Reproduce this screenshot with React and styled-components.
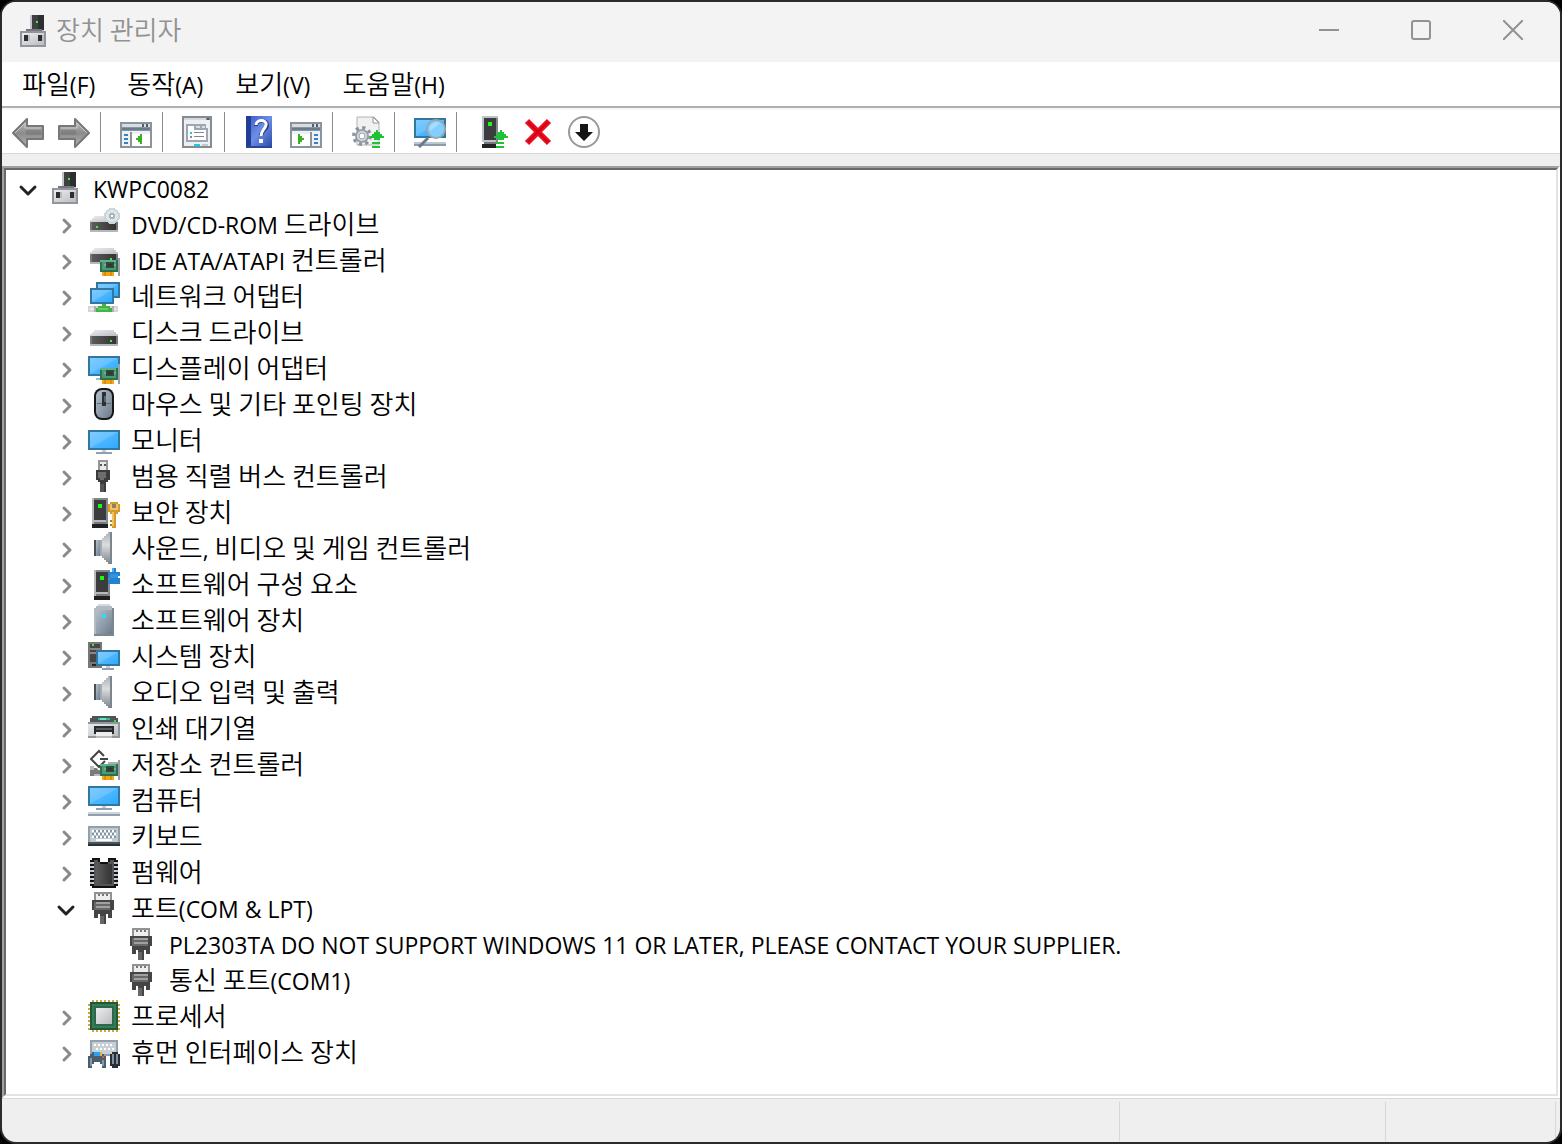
import React, { useState } from 'react';
import styled, { createGlobalStyle } from 'styled-components';

const GlobalStyle = createGlobalStyle`
  * {
    box-sizing: border-box;
  }
  body {
    margin: 0;
    background: #000;
    color: #000;
    font-family: "Noto Sans CJK KR", sans-serif;
    font-size: 26px;
    font-weight: 350;
  }
  button {
    padding: 0;
    border: 0;
    background: none;
    color: inherit;
    font: inherit;
  }
`;

const Window = styled.main`
  display: flex;
  flex-direction: column;
  min-height: 100vh;
  border: 2px solid #2b2b2d;
  border-radius: 16px;
  background: #efefef;
  overflow: hidden;
`;

const TitleBar = styled.header`
  display: flex;
  align-items: flex-start;
  height: 60px;
  padding: 0 1px 0 16px;
  background: #f3f3f3;
  color: #929292;
`;
const TitleIcon = styled.span`
  display: flex;
  padding-top: 13px;
`;
const Title = styled.h1`
  flex: 1;
  margin: 0;
  padding-left: 6px;
  font-size: 26px;
  font-weight: 350;
  line-height: 54px;
`;
const Caption = styled.button`
  display: flex;
  align-items: center;
  justify-content: center;
  width: 92px;
  height: 56px;
`;

const MenuBar = styled.nav`
  display: flex;
  gap: 32px;
  height: 46px;
  padding-left: 20px;
  border-bottom: 2px solid #b0b0b0;
  background: #fff;
`;
const MenuItem = styled.button`
  height: 42px;
  line-height: 42px;
  white-space: nowrap;
`;

const Latin = styled.span`
  font-family: "Open Sans", "Noto Sans", sans-serif;
  font-size: 23px;
  font-weight: 400;
`;

const Toolbar = styled.div`
  display: flex;
  align-items: flex-start;
  height: 46px;
  padding: 4px 3px 0;
  border-top: 2px solid #f4f8fd;
  border-bottom: 1px solid #d9d9d9;
  background: #fff;
`;
const Tool = styled.button`
  display: flex;
  align-items: center;
  justify-content: center;
  width: 46px;
  height: 36px;
`;
const Separator = styled.span`
  width: 16px;
  height: 40px;
  margin-top: -2px;
  padding-left: 3px;
  &::before {
    content: "";
    display: block;
    width: 1px;
    height: 40px;
    background: #8c8c8c;
  }
`;

const Frame = styled.section`
  display: flex;
  flex: 1;
  margin-top: 12px;
  border: 2px solid;
  border-color: #a0a0a0 #fff #fff #a0a0a0;
`;
const Tree = styled.ul`
  flex: 1;
  margin: 0;
  padding: 2px 0 22px 6px;
  border: 2px solid;
  border-color: #696969 #e3e3e3 #e3e3e3 #696969;
  background: #fff;
  list-style: none;
`;
const Branch = styled.ul`
  margin: 0;
  padding: 0 0 0 38px;
  list-style: none;
`;
const Row = styled.div`
  display: flex;
  align-items: flex-start;
  height: 36px;
`;
const Toggle = styled.button`
  display: flex;
  width: 38px;
  height: 36px;
  color: ${p => (p.$open ? '#222' : '#8a8a8a')};
`;
const ToggleSpace = styled.span`
  width: 38px;
`;
const Label = styled.span`
  padding-left: 11px;
  line-height: 30px;
  white-space: nowrap;
`;

const StatusBar = styled.footer`
  display: flex;
  height: 44px;
  padding: 3px 4px 1px 0;
  border-top: 1px solid #d7d7d7;
`;
const StatusCell = styled.span`
  flex: ${p => (p.$width ? `0 0 ${p.$width}px` : '1')};
  border-right: 1px solid #d7d7d7;
`;

const Svg = styled.svg`
  display: block;
  flex: none;
  width: ${p => p.$size || 32}px;
  height: ${p => p.$size || 32}px;
`;
const Defs = styled.svg`
  display: block;
  width: 0;
  height: 0;
`;

const Icon = ({ children }) => (
  <Svg viewBox="0 0 32 32" aria-hidden="true" shapeRendering="crispEdges">
    {children}
  </Svg>
);

const Gradients = () => (
  <Defs aria-hidden="true">
    <defs>
      <linearGradient id="screen" x1="0" y1="0" x2="1" y2="1">
        <stop offset="0" stopColor="#7dccff" />
        <stop offset="0.48" stopColor="#68c1ff" />
        <stop offset="0.52" stopColor="#4ab6ff" />
        <stop offset="1" stopColor="#30aaff" />
      </linearGradient>
      <linearGradient id="metal" x1="0" y1="0" x2="1" y2="1">
        <stop offset="0" stopColor="#ededee" />
        <stop offset="1" stopColor="#b9bcc0" />
      </linearGradient>
      <linearGradient id="dark" x1="0" y1="0" x2="1" y2="0">
        <stop offset="0" stopColor="#5c5c5c" />
        <stop offset="1" stopColor="#333" />
      </linearGradient>
      <linearGradient id="steel" x1="0" y1="0" x2="1" y2="1">
        <stop offset="0" stopColor="#b5c0ca" />
        <stop offset="1" stopColor="#6d7c8c" />
      </linearGradient>
      <linearGradient id="cone" x1="0" y1="0" x2="0" y2="1">
        <stop offset="0" stopColor="#a9afb5" />
        <stop offset="0.4" stopColor="#dcdddf" />
        <stop offset="1" stopColor="#7d858c" />
      </linearGradient>
      <linearGradient id="arrow" x1="0" y1="0" x2="0" y2="1">
        <stop offset="0" stopColor="#c8c8c8" />
        <stop offset="0.5" stopColor="#8b8b8b" />
        <stop offset="1" stopColor="#b4b4b4" />
      </linearGradient>
      <linearGradient id="help" x1="0" y1="0" x2="1" y2="1">
        <stop offset="0" stopColor="#3559c9" />
        <stop offset="0.5" stopColor="#6d8ee8" />
        <stop offset="1" stopColor="#2746a4" />
      </linearGradient>
    </defs>
  </Defs>
);

const Screen = ({ x, y, w, h }) => (
  <>
    <path fill="#31779f" d={`M${x} ${y}h${w}v${h}h${-w}z`} />
    <rect x={x + 2} y={y + 2} width={w - 4} height={h - 4} fill="url(#screen)" />
  </>
);

const Card = ({ top = 14 }) => (
  <>
    <path fill="#2a7150" d="M12 16h18v12H12z" />
    <path fill="#4b9a74" d="M14 18h14v8H14z" />
    <path fill="#5fb187" d="M12 16h16v2H12z" />
    <path fill="#2b4a3c" d="M18 18h8v6h-8z" />
    <path fill="#8b9d95" d="M16 20h2v2h-2zM26 20h2v2h-2z" />
    <path fill="#333" d="M20 20h4v2h-4z" />
    <path fill="#f5a317" d="M14 28h12v4H14z" />
    <path fill="#dd8f05" d="M16 28h2v4h-2zM22 28h2v4h-2z" />
    <path fill="#9b9fa1" d={`M30 ${top}h2V32h-2z`} />
  </>
);

const Drive = ({ y, led }) => (
  <>
    <path fill="url(#metal)" d={`M6 ${y}h20v2h2v2h2v2H2v-2h2v-2h2z`} />
    <path fill="#77797c" d={`M2 ${y + 6}h28v10H2z`} />
    <path fill="url(#dark)" d={`M4 ${y + 6}h24v8H4z`} />
    <path fill="#b5b8bb" d={`M2 ${y + 14}h28v2H2z`} />
    <path fill="#3cf03c" d={`M${led} ${y + 10}h2v2h-2z`} />
  </>
);

const Tower = ({ x }) => (
  <>
    <path fill="#b7babd" d={`M${x} 2h16v26h-16z`} />
    <path fill="#85888b" d={`M${x + 2} 2h14v2h-14zM${x + 14} 4h2v24h-2z`} />
    <path fill="#3b3c3d" d={`M${x + 2} 4h12v20h-12z`} />
    <path fill="#202020" d={`M${x} 28h16v4h-16z`} />
    <path fill="#77797b" d={`M${x + 2} 26h12v2h-12z`} />
    <path fill="#20f520" d={`M${x + 6} 8h4v4h-4z`} />
  </>
);

const UpArrow = () => (
  <path
    fill="#1fc136"
    d="M24 14h2v2h2v2h2v2h2v2h-4v2h-6v-2h-4v-2h2v-2h2v-2h2zM20 26h8v2h-8zM20 30h8v2h-8z"
  />
);

const DeviceManager = () => (
  <Icon>
    <path fill="#c3c7cb" d="M12 0h14v16H12z" />
    <path fill="#3e4041" d="M14 0h12v15H14z" />
    <path fill="#2d2e30" d="M20 0h6v15h-6z" />
    <path fill="#3cf03c" d="M18 6h2v2h-2z" />
    <path fill="#74777b" d="M8 14h16v2H8z" />
    <path fill="#92959b" d="M2 16h26v16H2z" />
    <path fill="url(#metal)" d="M4 18h22v12H4z" />
    <path fill="#2d2e30" d="M6 20h4v6H6zM20 20h4v6h-4z" />
    <path fill="#b9bbc0" d="M10 20h2v6h-2zM24 20h2v6h-2z" />
  </Icon>
);

const Dvd = () => (
  <Icon>
    <Drive y={8} led={8} />
    <circle cx="24" cy="8" r="8" fill="#ccd5d9" />
    <circle cx="24" cy="8" r="6" fill="#dde5e8" />
    <circle cx="24" cy="8" r="3" fill="#a9b5bd" />
    <circle cx="24" cy="8" r="1" fill="#fff" />
  </Icon>
);

const Ide = () => (
  <Icon>
    <Drive y={4} led={22} />
    <Card />
  </Icon>
);

const Network = () => (
  <Icon>
    <path fill="#d4d7d8" d="M0 26h30v6H0z" />
    <path fill="#eee" d="M2 28h26v2H2z" />
    <path fill="#aab2ae" d="M6 26h2v6H6zM24 26h2v6h-2z" />
    <path fill="#3fb448" d="M8 28h2v-2h4v-2h4v2h4v2h2v4H8z" />
    <path fill="#65d060" d="M10 28h10v2H10z" />
    <Screen x={8} y={2} w={24} h={16} />
    <Screen x={2} y={8} w={24} h={16} />
  </Icon>
);

const Disk = () => (
  <Icon>
    <Drive y={14} led={22} />
  </Icon>
);

const Display = () => (
  <Icon>
    <Screen x={0} y={4} w={32} h={20} />
    <path fill="#a9b8c5" d="M8 26h4v2H8z" />
    <Card top={12} />
  </Icon>
);

const Mouse = () => (
  <Svg viewBox="0 0 32 32" aria-hidden="true">
    <rect x="6" y="0" width="20" height="32" rx="8" fill="#15181b" />
    <rect x="8" y="2" width="16" height="28" rx="6" fill="url(#steel)" />
    <path fill="#5d6a77" d="M9 15h14v1H9z" />
    <path fill="#2c3035" d="M14 4h4v14h-4z" />
    <path fill="#59636d" d="M16 8h2v6h-2z" />
  </Svg>
);

const Monitor = () => (
  <Icon>
    <Screen x={0} y={6} w={32} h={20} />
    <path fill="#c5ced6" d="M14 26h4v2h-4z" />
    <path fill="#91a0b0" d="M8 28h16v2H8z" />
  </Icon>
);

const Usb = () => (
  <Icon>
    <path fill="#969696" d="M10 0h10v10H10z" />
    <path fill="#eaeaea" d="M12 2h6v8h-6z" />
    <path fill="#555" d="M12 4h2v2h-2zM16 4h2v2h-2z" />
    <path fill="#3c3c3c" d="M8 10h14v10h-2v2h-2v10h-6V22h-2v-2H8z" />
    <path fill="#6d6d6d" d="M10 12h8v6h-2v2h-4v-2h-2z" />
    <path fill="#555" d="M12 24h4v8h-4z" />
  </Icon>
);

const Security = () => (
  <Icon>
    <Tower x={4} />
    <path fill="#d69a2b" d="M22 6h8v2h2v8h-2v2h-2v14h-4V18h-2v-2h-2V8h2z" />
    <path fill="#f1c367" d="M22 8h8v6h-8zM24 16h2v14h-2z" />
    <path fill="#8d8163" d="M24 8h4v4h-4z" />
    <path fill="#b47a17" d="M22 24h2v2h-2zM22 28h2v2h-2z" />
  </Icon>
);

const Speaker = () => (
  <Icon>
    <path fill="#485158" d="M6 8h2v16H6z" />
    <path fill="url(#steel)" d="M8 8h4v16H8z" />
    <path fill="url(#cone)" d="M12 8h2V6h2V4h2V2h2V0h4v32h-4v-2h-2v-2h-2v-2h-2v-2h-2z" />
    <path fill="#7a858e" d="M22 0h2v32h-2z" />
    <path fill="#a3abb2" d="M12 8h2v16h-2z" />
  </Icon>
);

const SoftwareComponent = () => (
  <Icon>
    <Tower x={6} />
    <path fill="#2383d2" d="M20 4h4V0h4v4h4v4h-2v2h2v6H20v-4h2v-2h-2z" />
    <path fill="#55a9e9" d="M24 0h2v4h-2z" />
    <path fill="#3694df" d="M22 6h8v4h-8z" />
  </Icon>
);

const SoftwareDevice = () => (
  <Icon>
    <path fill="#b3bbc1" d="M10 0h12v2h2v2h2v28H6V4h2V2h2z" />
    <path fill="#d5dade" d="M10 0h12v2H10z" />
    <path fill="#7b8790" d="M6 30h20v2H6zM24 4h2v28h-2z" />
    <path fill="url(#steel)" d="M8 6h16v24H8z" />
    <path fill="#35d9ee" d="M14 10h4v4h-4z" />
  </Icon>
);

const System = () => (
  <Icon>
    <path fill="#777" d="M0 2h14v26H0z" />
    <path fill="#464646" d="M2 4h10v18H2z" />
    <path fill="#888" d="M2 8h10v2H2zM2 12h6v2H2z" />
    <path fill="#242424" d="M4 24h4v2H4z" />
    <path fill="#3cf03c" d="M4 4h2v2H4z" />
    <Screen x={8} y={10} w={24} h={16} />
    <path fill="#c5ced6" d="M18 26h4v2h-4z" />
    <path fill="#91a0b0" d="M14 28h12v2H14z" />
  </Icon>
);

const Printer = () => (
  <Icon>
    <path fill="#4c555a" d="M4 4h24v2h2v4H2V6h2z" />
    <path fill="#2fbf8d" d="M10 6h12v2H10z" />
    <path fill="#64e5c2" d="M12 6h6v2h-6z" />
    <path fill="url(#metal)" d="M0 10h32v14H0z" />
    <path fill="#8c979e" d="M0 10h32v2H0zM0 24h32v2H0zM30 12h2v12h-2z" />
    <path fill="#20ee20" d="M26 8h2v2h-2z" />
    <path fill="#272a2c" d="M6 14h20v8H6z" />
    <path fill="#555b5f" d="M8 16h16v2H8z" />
    <path fill="#ededed" d="M8 20h16v6H8z" />
    <path fill="#bbb" d="M8 24h16v2H8z" />
  </Icon>
);

const Storage = () => (
  <Icon>
    <path fill="#777b7c" d="M2 20h10v8H2z" />
    <path fill="#bbb" d="M2 18h4v4H2zM6 26h6v2H6z" />
    <path fill="#a8b0b0" d="M20 14h10v2H20z" />
    <g fill="none" shapeRendering="auto">
      <path stroke="#fff" strokeWidth="5" d="M16 8l-5-5-8 8 8 8 6-6" />
      <path stroke="#444" strokeWidth="2" d="M16 8l-5-5-8 8 8 8 6-6M20 11h-8" />
    </g>
    <Card top={12} />
  </Icon>
);

const Computer = () => (
  <Icon>
    <Screen x={0} y={2} w={32} h={20} />
    <path fill="#c5ced6" d="M14 22h4v2h-4z" />
    <path fill="#91a0b0" d="M8 24h16v2H8zM0 30h32v2H0z" />
    <path fill="#ccd5dd" d="M0 28h32v2H0z" />
  </Icon>
);

const Keyboard = () => (
  <Icon>
    <path fill="#91a0ac" d="M0 6h32v18H0z" />
    <path fill="#c0cad1" d="M2 8h28v14H2z" />
    <path stroke="#fff" strokeWidth="2" strokeDasharray="2 2" d="M4 11h24M6 14h22M4 17h24" />
    <path fill="#fff" d="M8 19h16v2H8z" />
    <path stroke="#8796a1" strokeWidth="2" strokeDasharray="2 2" d="M6 11h22M4 14h24M6 17h22" />
    <path fill="#293137" d="M0 22h32v4H0z" />
    <path fill="#48545c" d="M0 22h32v2H0z" />
  </Icon>
);

const Firmware = () => (
  <Icon>
    <path stroke="#111" strokeWidth="4" strokeDasharray="2 2" d="M4 4v26M28 4v26" />
    <path stroke="#b7c0cc" strokeWidth="4" strokeDasharray="2 2" d="M4 6v24M28 6v24" />
    <path fill="#111" d="M4 2h8v4h8V2h8v30H4z" />
    <path fill="#555" d="M6 4h4v2h2v2h8V6h2V4h4v26H6z" />
    <path fill="url(#dark)" d="M8 8h16v20H8z" />
    <path stroke="#c9cfd8" strokeWidth="2" strokeDasharray="2 2" d="M5 6v24M27 6v24" />
  </Icon>
);

const Port = () => (
  <Icon>
    <path fill="#929292" d="M6 0h18v10H6z" />
    <path fill="#eee" d="M8 2h14v6H8z" />
    <path fill="#777" d="M10 2h2v2h-2zM14 2h2v2h-2zM18 2h2v2h-2z" />
    <path fill="#454545" d="M4 8h22v10h-2v8h-4v-4h-2v10h-6V22h-2v4H6v-8H4z" />
    <path fill="#686868" d="M6 10h16v8H6z" />
    <path fill="#a0a0a0" d="M8 10h14v2H8zM8 14h14v2H8z" />
    <path fill="#666" d="M12 24h4v8h-4z" />
  </Icon>
);

const Cpu = () => (
  <Icon>
    <path
      stroke="#d2a43b"
      strokeWidth="2"
      strokeDasharray="2 2"
      d="M4 1h26M4 31h26M1 4v26M31 4v26"
    />
    <path fill="#1f573b" d="M2 2h28v28H2z" />
    <path fill="#377c59" d="M4 4h24v24H4z" />
    <path fill="#2c694b" d="M6 6h20v20H6z" />
    <path fill="url(#metal)" d="M8 8h16v16H8z" />
  </Icon>
);

const Hid = () => (
  <Icon>
    <path fill="#94a1ac" d="M2 4h28v16H2z" />
    <path fill="#c7d0d6" d="M4 6h24v12H4z" />
    <path stroke="#fff" strokeWidth="2" strokeDasharray="2 2" d="M6 9h20M8 13h18" />
    <path fill="#4c5d6c" d="M4 16h10v2h2v2h2v12h-4v-4h-2v-2H6v2H4v4H0V20h2v-2h2z" />
    <path fill="#8798a6" d="M2 22h2v8H2zM14 24h2v6h-2z" />
    <path fill="#27a5f2" d="M6 16h6v4H6z" />
    <path fill="#f0b13c" d="M12 16h2v4h-2z" />
    <path fill="#e65145" d="M14 20h2v2h-2z" />
    <path fill="#272f37" d="M24 16h6v2h2v12h-2v2h-6v-2h-2V18h2z" />
    <path fill="#8190a0" d="M24 18h2v10h-2zM28 18h2v10h-2z" />
  </Icon>
);

const Arrow = ({ forward }) => (
  <Svg viewBox="0 0 32 32" aria-hidden="true">
    <g transform={forward ? 'translate(32 0) scale(-1 1)' : undefined}>
      <path
        fill="url(#arrow)"
        stroke="#777"
        strokeWidth="2"
        strokeLinejoin="round"
        d="M1 17L15 3v7h16v13H15v8z"
      />
      <path fill="none" stroke="#c9c9c9" d="M3 17L13 7v5h16" />
      <path fill="#666" opacity="0.35" d="M14 14h15v5H14z" />
    </g>
  </Svg>
);

const Panel = ({ right }) => (
  <Icon>
    <path fill="#8c949b" d="M0 6h32v26H0z" />
    <path fill="#d8dde4" d="M2 8h28v3H2z" />
    <path fill="#47617f" d="M22 8h2v3h-2zM26 8h2v3h-2z" />
    <path fill="#687b91" d="M2 12h28v2H2z" />
    <path fill="#eef1f4" d="M2 15h28v15H2z" />
    <path fill="#fff" d={right ? 'M2 18h18v12H2z' : 'M12 18h18v12H12z'} />
    <path fill="#8c949b" d={right ? 'M20 16h2v14h-2z' : 'M10 16h2v14h-2z'} />
    <path
      fill="#397fc4"
      d={right ? 'M24 18h4v2h-4zM24 22h4v2h-4zM24 26h4v2h-4z' : 'M4 18h4v2H4zM4 22h4v2H4zM4 26h4v2H4z'}
    />
    <path
      fill="#3aad29"
      d={right ? 'M8 18h2v2h2v2h2v2h-2v2h-2v2H8z' : 'M22 18h-2v2h-2v2h-2v2h2v2h2v2h2z'}
    />
  </Icon>
);

const Properties = () => (
  <Icon>
    <path fill="#858b90" d="M0 0h30v32H0z" />
    <path fill="#edf0f1" d="M2 4h26v26H2z" />
    <path fill="#d5d9dd" d="M2 2h22v2H2z" />
    <path fill="#3d5d84" d="M25 2h2v2h-2z" />
    <path fill="#9fa5b4" d="M4 8h20v4h2v14H4z" />
    <path fill="#fff" d="M6 10h6v4h12v10H6z" />
    <path fill="#d9dde4" d="M14 10h4v2h-4zM20 10h3v2h-3z" />
    <path fill="#20c6ee" d="M8 16h2v2H8zM12 28h6v2h-6z" />
    <path fill="#888" d="M8 20h2v2H8zM12 16h10v1H12zM12 20h10v1H12z" />
    <path fill="#c4c8cb" d="M20 28h6v2h-6z" />
  </Icon>
);

const Help = () => (
  <Svg viewBox="0 0 32 32" aria-hidden="true">
    <path fill="url(#help)" d="M2 0h26v32H2z" />
    <path fill="#223d94" d="M2 0h5v32H2z" />
    <path fill="#294893" d="M2 30h26v2H2z" />
    <path
      fill="none"
      stroke="#283f83"
      strokeWidth="4"
      d="M12 10c0-7 12-7 11 0-1 5-6 4-6 10"
    />
    <path fill="none" stroke="#fff" strokeWidth="3" d="M12 9c0-6 11-6 10 0-1 5-5 5-5 11" />
    <path fill="#fff" d="M15 23h4v4h-4z" />
  </Svg>
);

const UpdateDriver = () => (
  <Svg viewBox="0 0 32 32" aria-hidden="true">
    <path fill="#f1f1f1" stroke="#b3b3b3" d="M5 1h17l5 5v23H5z" />
    <path fill="#fff" stroke="#999" d="M21 1v6h6z" />
    <circle
      cx="10"
      cy="20"
      r="8"
      fill="none"
      stroke="#8a949c"
      strokeWidth="4"
      strokeDasharray="3 3.28"
    />
    <circle cx="10" cy="20" r="6" fill="#d6dce0" stroke="#98a2aa" strokeWidth="2" />
    <circle cx="10" cy="20" r="3" fill="#fff" stroke="#98a2aa" />
    <UpArrow />
  </Svg>
);

const Scan = () => (
  <Svg viewBox="0 0 32 32" aria-hidden="true">
    <Screen x={0} y={2} w={32} h={20} />
    <path fill="#bcc8d1" d="M0 26h32v2H0z" />
    <path fill="#8b9bac" d="M0 28h32v2H0z" />
    <path stroke="#687c8b" strokeWidth="3" d="M14 22l-9 9" />
    <circle cx="22" cy="13" r="9" fill="#83cfff" stroke="#97a7af" strokeWidth="2" />
    <path fill="#a7ddff" d="M16 15a7 7 0 0110-8z" />
  </Svg>
);

const AddDriver = () => (
  <Icon>
    <path fill="#bec3c7" d="M6 0h16v26H6z" />
    <path fill="#3b3d3e" d="M8 2h12v22H8z" />
    <path fill="#85888b" d="M20 2h2v24h-2z" />
    <path fill="#222" d="M6 28h14v4H6z" />
    <path fill="#777" d="M8 26h12v2H8z" />
    <path fill="#20f520" d="M12 6h4v4h-4z" />
    <UpArrow />
  </Icon>
);

const Uninstall = () => (
  <Svg viewBox="0 0 32 32" aria-hidden="true">
    <path stroke="#e81123" strokeWidth="6" d="M5 5l22 22M27 5L5 27" />
    <path stroke="#d8000f" strokeWidth="2" d="M6 6l20 20M26 6L6 26" />
  </Svg>
);

const Disable = () => (
  <Svg viewBox="0 0 32 32" aria-hidden="true">
    <circle cx="16" cy="16" r="15" fill="#fff" stroke="#999" strokeWidth="2" />
    <path fill="#151515" d="M12 8h8v8h5l-9 9-9-9h5z" />
  </Svg>
);

// Hangul keeps the page font, everything else is set in the smaller Latin face
const Text = ({ children }) =>
  children.split(/([A-Za-z0-9()&/.,\-]+(?: [A-Za-z0-9()&/.,\-]+)*)/).map((part, i) =>
    i % 2 ? <Latin key={i}>{part}</Latin> : part
  );

const Chevron = ({ open }) => (
  <Svg $size={36} viewBox="0 0 36 36" fill="none" stroke="currentColor" aria-hidden="true">
    <path
      strokeWidth="3"
      strokeLinecap="round"
      strokeLinejoin="round"
      d={open ? 'M9 15l7 7 7-7' : 'M14 12l6 6-6 6'}
    />
  </Svg>
);

const Node = ({ label, icon: Picture, items, leaf, expanded }) => {
  const [open, setOpen] = useState(Boolean(expanded));

  return (
    <li>
      <Row>
        {leaf ? (
          <ToggleSpace />
        ) : (
          <Toggle $open={open} aria-label={label} aria-expanded={open} onClick={() => setOpen(!open)}>
            <Chevron open={open} />
          </Toggle>
        )}
        <Picture />
        <Label>
          <Text>{label}</Text>
        </Label>
      </Row>
      {open && items && (
        <Branch>
          {items.map(item => (
            <Node key={item.label} {...item} />
          ))}
        </Branch>
      )}
    </li>
  );
};

const devices = [
  { label: 'DVD/CD-ROM 드라이브', icon: Dvd },
  { label: 'IDE ATA/ATAPI 컨트롤러', icon: Ide },
  { label: '네트워크 어댑터', icon: Network },
  { label: '디스크 드라이브', icon: Disk },
  { label: '디스플레이 어댑터', icon: Display },
  { label: '마우스 및 기타 포인팅 장치', icon: Mouse },
  { label: '모니터', icon: Monitor },
  { label: '범용 직렬 버스 컨트롤러', icon: Usb },
  { label: '보안 장치', icon: Security },
  { label: '사운드, 비디오 및 게임 컨트롤러', icon: Speaker },
  { label: '소프트웨어 구성 요소', icon: SoftwareComponent },
  { label: '소프트웨어 장치', icon: SoftwareDevice },
  { label: '시스템 장치', icon: System },
  { label: '오디오 입력 및 출력', icon: Speaker },
  { label: '인쇄 대기열', icon: Printer },
  { label: '저장소 컨트롤러', icon: Storage },
  { label: '컴퓨터', icon: Computer },
  { label: '키보드', icon: Keyboard },
  { label: '펌웨어', icon: Firmware },
  {
    label: '포트(COM & LPT)',
    icon: Port,
    expanded: true,
    items: [
      {
        label: 'PL2303TA DO NOT SUPPORT WINDOWS 11 OR LATER, PLEASE CONTACT YOUR SUPPLIER.',
        icon: Port,
        leaf: true,
      },
      { label: '통신 포트(COM1)', icon: Port, leaf: true },
    ],
  },
  { label: '프로세서', icon: Cpu },
  { label: '휴먼 인터페이스 장치', icon: Hid },
];

const menus = ['파일(F)', '동작(A)', '보기(V)', '도움말(H)'];

const App = () => (
  <>
    <GlobalStyle />
    <Gradients />
    <Window>
      <TitleBar>
        <TitleIcon>
          <DeviceManager />
        </TitleIcon>
        <Title>장치 관리자</Title>
        <Caption aria-label="최소화">
          <Svg $size={20} viewBox="0 0 20 20" aria-hidden="true">
            <path fill="#929292" d="M0 9h20v2H0z" />
          </Svg>
        </Caption>
        <Caption aria-label="최대화">
          <Svg $size={20} viewBox="0 0 20 20" aria-hidden="true">
            <rect x="1" y="1" width="18" height="18" rx="2" fill="none" stroke="#929292" strokeWidth="2" />
          </Svg>
        </Caption>
        <Caption aria-label="닫기">
          <Svg $size={20} viewBox="0 0 20 20" aria-hidden="true">
            <path stroke="#929292" strokeWidth="2" d="M0 0l20 20M20 0L0 20" />
          </Svg>
        </Caption>
      </TitleBar>
      <MenuBar>
        {menus.map(menu => (
          <MenuItem key={menu}>
            <Text>{menu}</Text>
          </MenuItem>
        ))}
      </MenuBar>
      <Toolbar role="toolbar">
        <Tool aria-label="뒤로"><Arrow /></Tool>
        <Tool aria-label="앞으로"><Arrow forward /></Tool>
        <Separator />
        <Tool aria-label="콘솔 트리 표시"><Panel /></Tool>
        <Separator />
        <Tool aria-label="속성"><Properties /></Tool>
        <Separator />
        <Tool aria-label="도움말"><Help /></Tool>
        <Tool aria-label="작업 창 표시"><Panel right /></Tool>
        <Separator />
        <Tool aria-label="드라이버 업데이트"><UpdateDriver /></Tool>
        <Separator />
        <Tool aria-label="하드웨어 변경 사항 검색"><Scan /></Tool>
        <Separator />
        <Tool aria-label="드라이버 추가"><AddDriver /></Tool>
        <Tool aria-label="디바이스 제거"><Uninstall /></Tool>
        <Tool aria-label="디바이스 사용 안 함"><Disable /></Tool>
      </Toolbar>
      <Frame>
        <Tree>
          <Node label="KWPC0082" icon={DeviceManager} items={devices} expanded />
        </Tree>
      </Frame>
      <StatusBar>
        <StatusCell />
        <StatusCell $width={266} />
        <StatusCell $width={170} />
      </StatusBar>
    </Window>
  </>
);

export default App;
